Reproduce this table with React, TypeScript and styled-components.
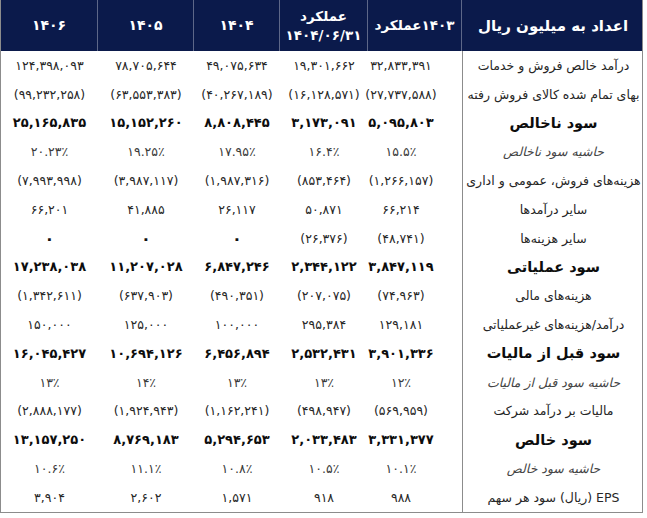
import React from "react";
import styled, { createGlobalStyle, css } from "styled-components";

const Global = createGlobalStyle`
  html, body { margin: 0; padding: 0; background: #ffffff; }
  body { font-family: "DejaVu Sans", "Noto Sans", sans-serif; }
`;

const COLS = "97px 96px 86px 88px 94px 182px";

const Table = styled.div`
  width: 643px;
  display: flex;
  flex-direction: column;
  border-left: 1px solid #8c8c8c;
  border-right: 1px solid #8c8c8c;
  border-bottom: 1px solid #8c8c8c;
  box-sizing: border-box;
`;

const HeadRow = styled.div`
  display: grid;
  grid-template-columns: ${COLS};
  height: 51px;
  background: #0b1a4b;
`;

const HeadCell = styled.div<{ $last?: boolean }>`
  display: flex;
  flex-direction: column;
  align-items: center;
  justify-content: center;
  gap: 3px;
  color: #ffffff;
  font-weight: bold;
  font-size: 14px;
  border-right: ${(p) => (p.$last ? "none" : "1px solid #5d6788")};
  line-height: 1.2;
`;

const HeadSmall = styled(HeadCell)`
  font-size: 13.5px;
`;

const HeadLabel = styled(HeadCell)`
  font-size: 15px;
`;

const Body = styled.div`
  display: flex;
  flex-direction: column;
`;

const Row = styled.div`
  display: grid;
  grid-template-columns: ${COLS};
  height: 28.8px;
`;

type Kind = "normal" | "bold" | "italic";

const ValueCell = styled.div<{ $kind: Kind; $pad?: boolean }>`
  display: flex;
  align-items: center;
  justify-content: center;
  font-size: 12.5px;
  color: #262626;
  padding-right: ${(p) => (p.$pad ? "28px" : "0")};
  ${(p) =>
    p.$kind === "bold" &&
    css`
      font-weight: bold;
      font-size: 13px;
      color: #0d0d0d;
    `}
  ${(p) =>
    p.$kind === "italic" &&
    css`
      color: #3a3a3a;
    `}
`;

const Zero = styled.span`
  font-size: 16px;
  font-weight: bold;
  color: #111111;
`;

const LabelCell = styled.div<{ $kind: Kind }>`
  display: flex;
  align-items: center;
  justify-content: center;
  border-left: 1px solid #8c8c8c;
  font-size: 12.5px;
  color: #262626;
  white-space: nowrap;
  ${(p) =>
    p.$kind === "bold" &&
    css`
      font-weight: bold;
      font-size: 14.5px;
      color: #0d0d0d;
    `}
  ${(p) =>
    p.$kind === "italic" &&
    css`
      font-style: italic;
      color: #444444;
    `}
`;

type RowData = { label: string; kind: Kind; v: string[] };

const rows: RowData[] = [
  { label: "درآمد خالص فروش و خدمات", kind: "normal", v: ["۱۲۴,۳۹۸,۰۹۳", "۷۸,۷۰۵,۶۴۴", "۴۹,۰۷۵,۶۳۴", "۱۹,۳۰۱,۶۶۲", "۳۲,۸۳۳,۳۹۱"] },
  { label: "بهای تمام شده کالای فروش رفته", kind: "normal", v: ["(۹۹,۲۳۲,۲۵۸)", "(۶۳,۵۵۳,۳۸۳)", "(۴۰,۲۶۷,۱۸۹)", "(۱۶,۱۲۸,۵۷۱)", "(۲۷,۷۳۷,۵۸۸)"] },
  { label: "سود ناخالص", kind: "bold", v: ["۲۵,۱۶۵,۸۳۵", "۱۵,۱۵۲,۲۶۰", "۸,۸۰۸,۴۴۵", "۳,۱۷۳,۰۹۱", "۵,۰۹۵,۸۰۳"] },
  { label: "حاشیه سود ناخالص", kind: "italic", v: ["۲۰.۲۳٪", "۱۹.۲۵٪", "۱۷.۹۵٪", "۱۶.۴٪", "۱۵.۵٪"] },
  { label: "هزینه‌های فروش، عمومی و اداری", kind: "normal", v: ["(۷,۹۹۳,۹۹۸)", "(۳,۹۸۷,۱۱۷)", "(۱,۹۸۷,۳۱۶)", "(۸۵۳,۴۶۴)", "(۱,۲۶۶,۱۵۷)"] },
  { label: "سایر درآمدها", kind: "normal", v: ["۶۶,۲۰۱", "۴۱,۸۸۵", "۲۶,۱۱۷", "۵۰,۸۷۱", "۶۶,۲۱۴"] },
  { label: "سایر هزینه‌ها", kind: "normal", v: ["۰", "۰", "۰", "(۲۶,۳۷۶)", "(۴۸,۷۴۱)"] },
  { label: "سود عملیاتی", kind: "bold", v: ["۱۷,۲۳۸,۰۳۸", "۱۱,۲۰۷,۰۲۸", "۶,۸۴۷,۲۴۶", "۲,۳۴۴,۱۲۲", "۳,۸۴۷,۱۱۹"] },
  { label: "هزینه‌های مالی", kind: "normal", v: ["(۱,۳۴۲,۶۱۱)", "(۶۳۷,۹۰۳)", "(۴۹۰,۳۵۱)", "(۲۰۷,۰۷۵)", "(۷۴,۹۶۳)"] },
  { label: "درآمد/هزینه‌های غیرعملیاتی", kind: "normal", v: ["۱۵۰,۰۰۰", "۱۲۵,۰۰۰", "۱۰۰,۰۰۰", "۲۹۵,۳۸۴", "۱۲۹,۱۸۱"] },
  { label: "سود قبل از مالیات", kind: "bold", v: ["۱۶,۰۴۵,۴۲۷", "۱۰,۶۹۴,۱۲۶", "۶,۴۵۶,۸۹۴", "۲,۵۳۲,۴۳۱", "۳,۹۰۱,۳۳۶"] },
  { label: "حاشیه سود قبل از مالیات", kind: "italic", v: ["۱۳٪", "۱۴٪", "۱۳٪", "۱۳٪", "۱۲٪"] },
  { label: "مالیات بر درآمد شرکت", kind: "normal", v: ["(۲,۸۸۸,۱۷۷)", "(۱,۹۲۴,۹۴۳)", "(۱,۱۶۲,۲۴۱)", "(۴۹۸,۹۴۷)", "(۵۶۹,۹۵۹)"] },
  { label: "سود خالص", kind: "bold", v: ["۱۳,۱۵۷,۲۵۰", "۸,۷۶۹,۱۸۳", "۵,۲۹۴,۶۵۳", "۲,۰۳۳,۴۸۳", "۳,۳۳۱,۳۷۷"] },
  { label: "حاشیه سود خالص", kind: "italic", v: ["۱۰.۶٪", "۱۱.۱٪", "۱۰.۸٪", "۱۰.۵٪", "۱۰.۱٪"] },
  { label: "EPS (ریال) سود هر سهم", kind: "normal", v: ["۳,۹۰۴", "۲,۶۰۲", "۱,۵۷۱", "۹۱۸", "۹۸۸"] },
];

export default function App() {
  return (
    <>
      <Global />
      <Table>
        <HeadRow>
          <HeadCell>۱۴۰۶</HeadCell>
          <HeadCell>۱۴۰۵</HeadCell>
          <HeadCell>۱۴۰۴</HeadCell>
          <HeadSmall dir="rtl">
            <span>عملکرد</span>
            <span dir="ltr">۱۴۰۴/۰۶/۳۱</span>
          </HeadSmall>
          <HeadSmall dir="rtl">۱۴۰۳عملکرد</HeadSmall>
          <HeadLabel dir="rtl" $last>
            اعداد به میلیون ریال
          </HeadLabel>
        </HeadRow>
        <Body>
          {rows.map((r) => (
            <Row key={r.label}>
              {r.v.map((val, i) => (
                <ValueCell key={i} dir="ltr" $kind={r.kind} $pad={i === 4}>
                  {val === "۰" ? <Zero>۰</Zero> : val}
                </ValueCell>
              ))}
              <LabelCell dir="rtl" $kind={r.kind}>
                {r.label}
              </LabelCell>
            </Row>
          ))}
        </Body>
      </Table>
    </>
  );
}
